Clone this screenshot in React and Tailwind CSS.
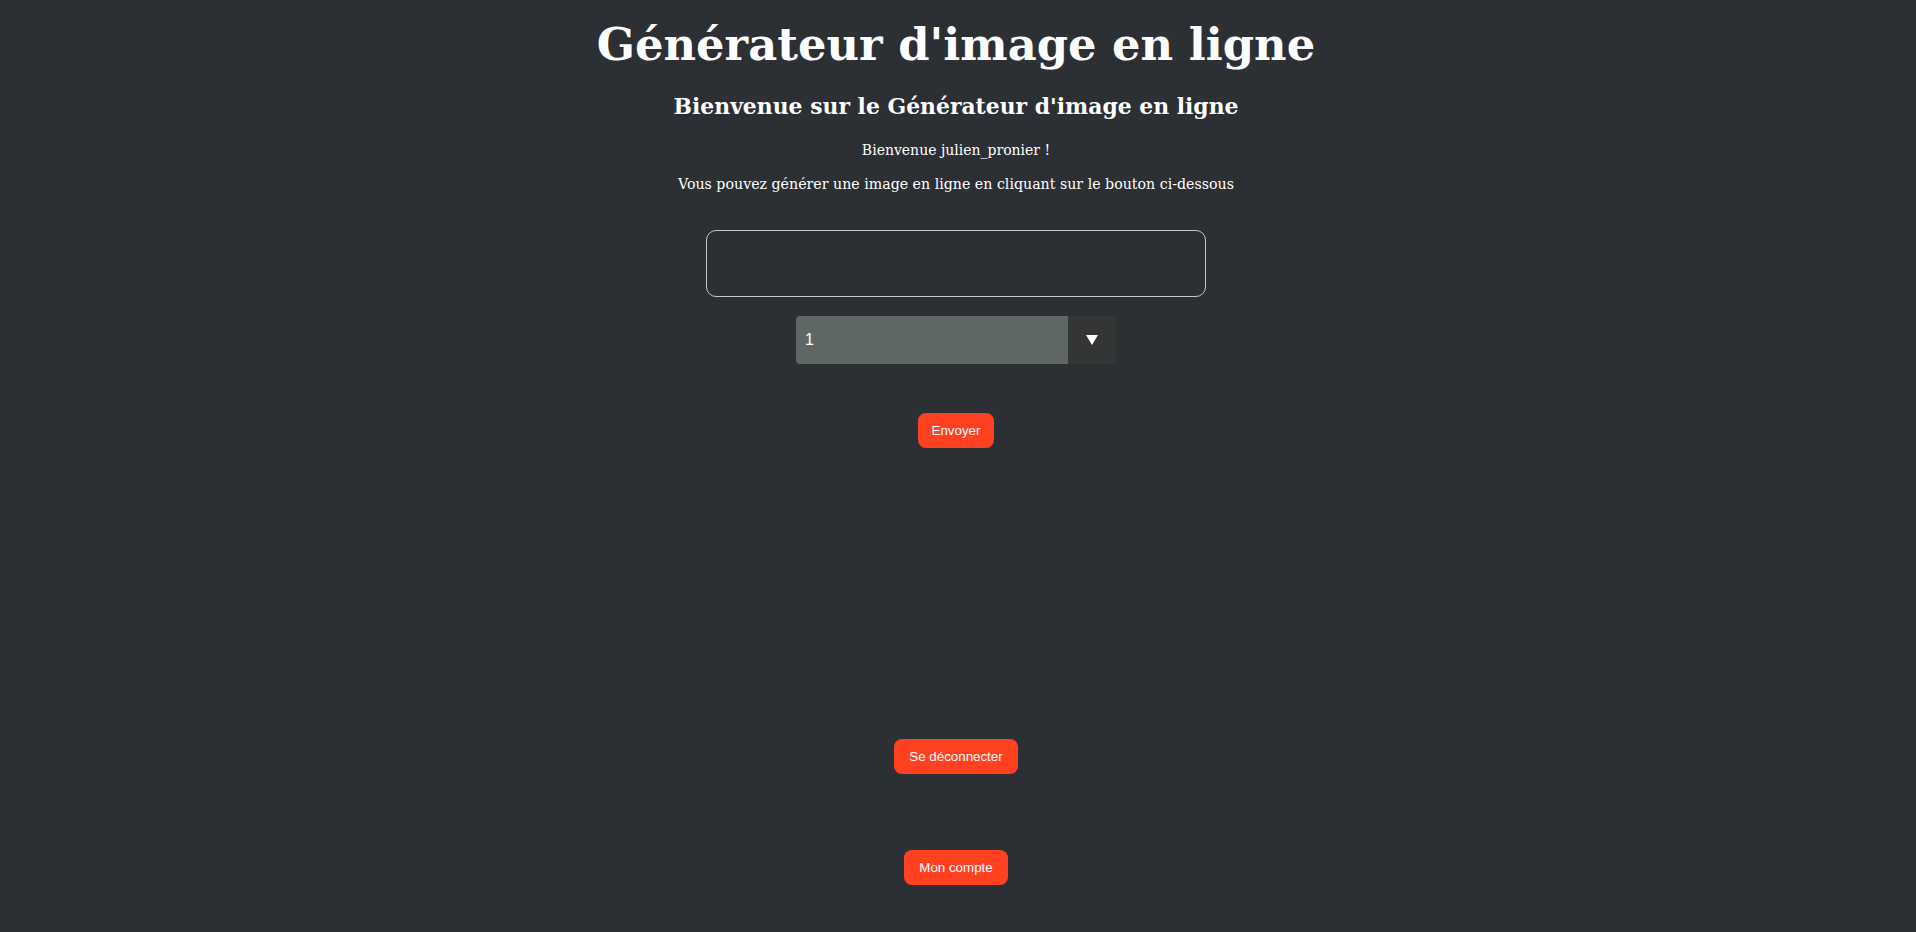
export default function App() {
  return (
    <div className="min-h-screen w-full bg-[#2c2f34] text-white flex flex-col items-center pr-[4px] font-['DejaVu_Serif',serif]">
      <h1 className="pt-[18px] text-[44.8px] leading-[54px] font-bold">Générateur d'image en ligne</h1>
      <h2 className="mt-[20px] text-[21.9px] leading-[28px] font-bold">Bienvenue sur le Générateur d'image en ligne</h2>
      <p className="mt-[21px] text-[14px] leading-[18px]">Bienvenue julien_pronier !</p>
      <p className="mt-[16px] text-[14.2px] leading-[18px]">Vous pouvez générer une image en ligne en cliquant sur le bouton ci-dessous</p>

      <input
        type="text"
        className="mt-[37px] w-[500px] h-[67px] rounded-[10px] border border-[#c9c9c9] bg-transparent px-3 outline-none"
      />

      <div className="mt-[19px] flex w-[320px] h-[48px] rounded-[4px] overflow-hidden font-['Liberation_Sans',sans-serif]">
        <div className="flex-1 bg-[#5e6764] flex items-center pl-[9px] text-[16px]">1</div>
        <div className="w-[48px] bg-[#333635] flex items-center justify-center">
          <svg width="12" height="10" viewBox="0 0 12 10">
            <path d="M0 0 L12 0 L6 10 Z" fill="#ffffff" />
          </svg>
        </div>
      </div>

      <button className="mt-[49px] h-[35px] px-[14px] rounded-[8px] bg-[#ff4122] text-[13.33px] font-['Liberation_Sans',sans-serif]">
        Envoyer
      </button>

      <button className="mt-[291px] h-[35px] px-[15px] rounded-[8px] bg-[#ff4122] text-[13.33px] font-['Liberation_Sans',sans-serif]">
        Se déconnecter
      </button>

      <button className="mt-[76px] h-[35px] px-[15px] rounded-[8px] bg-[#ff4122] text-[13.33px] font-['Liberation_Sans',sans-serif]">
        Mon compte
      </button>
    </div>
  );
}
